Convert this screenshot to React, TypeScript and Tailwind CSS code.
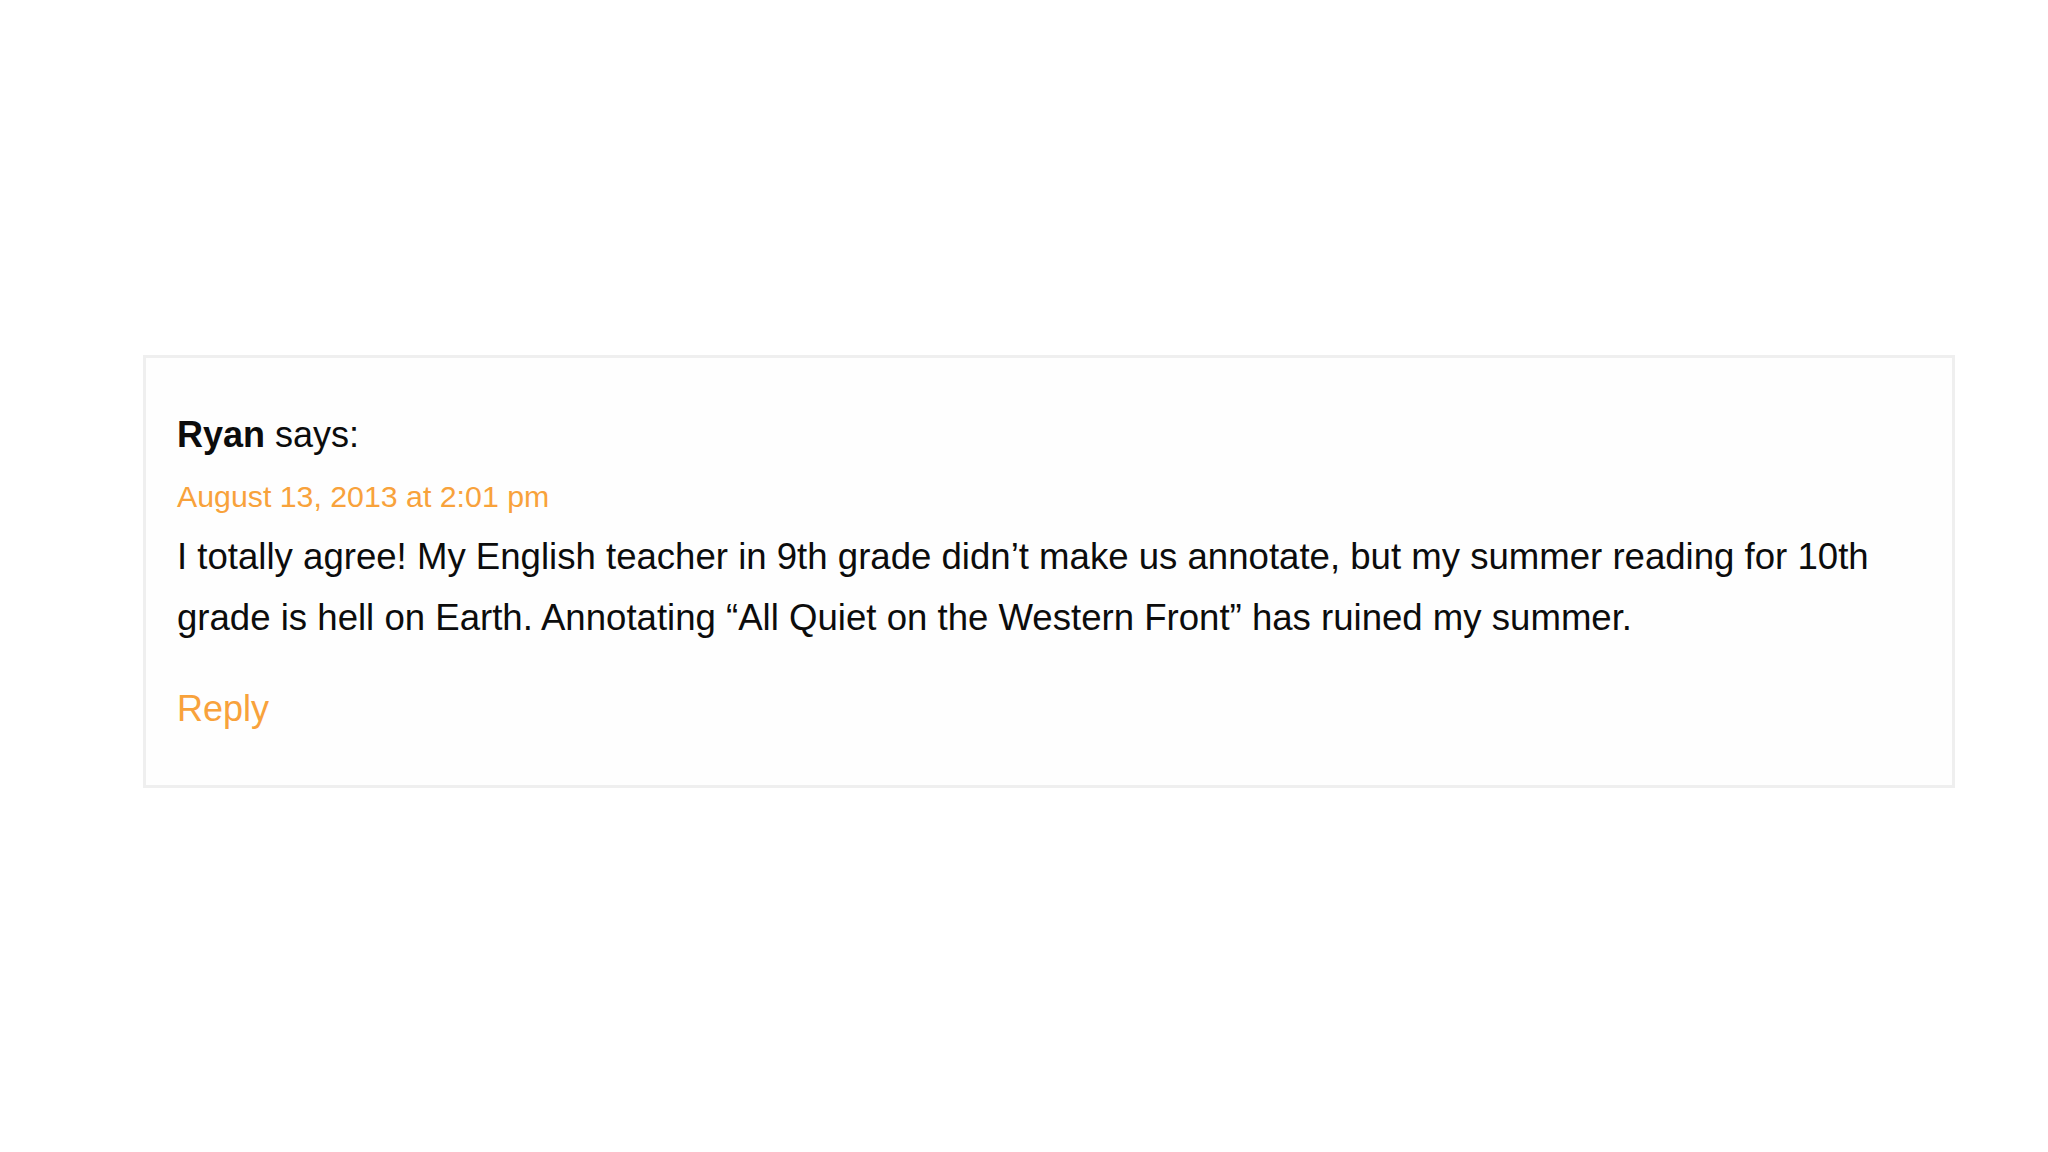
export default function App() {
  return (
    <div
      className="min-h-screen w-full bg-white pt-[355px] pl-[143px] pr-[92px]"
      style={{ fontFamily: '"Liberation Sans", Arial, Helvetica, sans-serif' }}
    >
      <div className="w-[1812px] border-[3px] border-[#efefef] bg-[#fefefe] pl-[31px] pr-8 pt-[56px] pb-[56px]">
        {/* Author */}
        <p className="text-[36px] leading-[41px] text-[#0c0c0c]">
          <span className="font-bold">Ryan</span> says:
        </p>

        {/* Date */}
        <a className="mt-[25px] block text-[30.3px] leading-[34px] text-[#f8a23b]">
          August 13, 2013 at 2:01 pm
        </a>

        {/* Comment */}
        <p className="mt-[12px] text-[36.6px] leading-[61px] text-[#0c0c0c]">
          I totally agree! My English teacher in 9th grade didn’t make us annotate, but my summer reading for 10th
          <br />
          grade is hell on Earth. Annotating “All Quiet on the Western Front” has ruined my summer.
        </p>

        {/* Reply */}
        <a className="mt-[40px] block text-[36px] leading-[41px] text-[#f8a23b]">Reply</a>
      </div>
    </div>
  );
}
